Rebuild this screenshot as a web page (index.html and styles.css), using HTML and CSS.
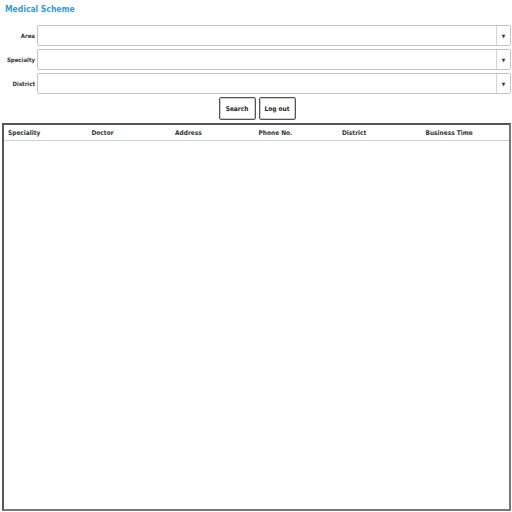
FILE: index.html
```html
<!DOCTYPE html>
<html>
<head>
<meta charset="utf-8">
<link rel="stylesheet" href="styles.css">
</head>
<body>
<div class="page">
  <h1 class="title">Medical Scheme</h1>
  <div class="form">
    <div class="row">
      <label class="lbl">Area</label>
      <div class="select"><span class="val"></span><span class="arrow">▼</span></div>
    </div>
    <div class="row">
      <label class="lbl">Specialty</label>
      <div class="select"><span class="val"></span><span class="arrow">▼</span></div>
    </div>
    <div class="row">
      <label class="lbl">District</label>
      <div class="select"><span class="val"></span><span class="arrow">▼</span></div>
    </div>
  </div>
  <div class="buttons">
    <button class="btn">Search</button>
    <button class="btn">Log out</button>
  </div>
  <div class="table">
    <div class="thead">
      <span>Speciality</span>
      <span>Doctor</span>
      <span>Address</span>
      <span>Phone No.</span>
      <span>District</span>
      <span>Business Time</span>
    </div>
  </div>
</div>
</body>
</html>
```
FILE: styles.css
```css
html, body {
  margin: 0;
  padding: 0;
  background: #fff;
}
body {
  width: 512px;
  height: 512px;
  overflow: hidden;
  font-family: "DejaVu Sans Condensed", "DejaVu Sans", sans-serif;
}
.page {
  display: flex;
  flex-direction: column;
  height: 512px;
  box-sizing: border-box;
  padding: 0 1px 1px 2px;
}
.title {
  margin: 0;
  padding: 4px 0 0 3px;
  height: 21px;
  box-sizing: border-box;
  font-size: 8.5px;
  font-weight: bold;
  color: #3399dd;
}
.form {
  display: flex;
  flex-direction: column;
  gap: 3px;
  margin-top: 4px;
}
.row {
  display: flex;
  align-items: center;
}
.lbl {
  width: 33px;
  text-align: right;
  padding-right: 2px;
  font-size: 6px;
  font-weight: bold;
  color: #333;
}
.select {
  flex: 1;
  height: 21px;
  box-sizing: border-box;
  border: 1px solid #c4c4c4;
  border-radius: 2px;
  display: flex;
  background: #fff;
}
.val { flex: 1; }
.arrow {
  width: 13px;
  border-left: 1px solid #d4d4d4;
  font-size: 5px;
  color: #333;
  display: flex;
  align-items: center;
  justify-content: center;
}
.buttons {
  display: flex;
  justify-content: center;
  gap: 3px;
  margin-top: 3px;
  padding-left: 1px;
}
.btn {
  width: 37px;
  height: 23px;
  padding: 0;
  background: #fff;
  border: 1px solid #555;
  border-radius: 2px;
  box-shadow: 0 0 0 1px #ccc inset;
  font-family: "DejaVu Sans Condensed", "DejaVu Sans", sans-serif;
  font-size: 6.5px;
  font-weight: bold;
  color: #222;
}
.table {
  flex: 1;
  margin-top: 3px;
  border: 2px solid #666;
  border-color: #555 #777 #777 #555;
  box-sizing: border-box;
}
.thead {
  display: grid;
  grid-template-columns: repeat(6, 1fr);
  height: 15px;
  align-items: center;
  border-bottom: 1px solid #c8cfe0;
  padding-left: 4px;
  font-size: 6.5px;
  font-weight: bold;
  color: #333;
}
```
